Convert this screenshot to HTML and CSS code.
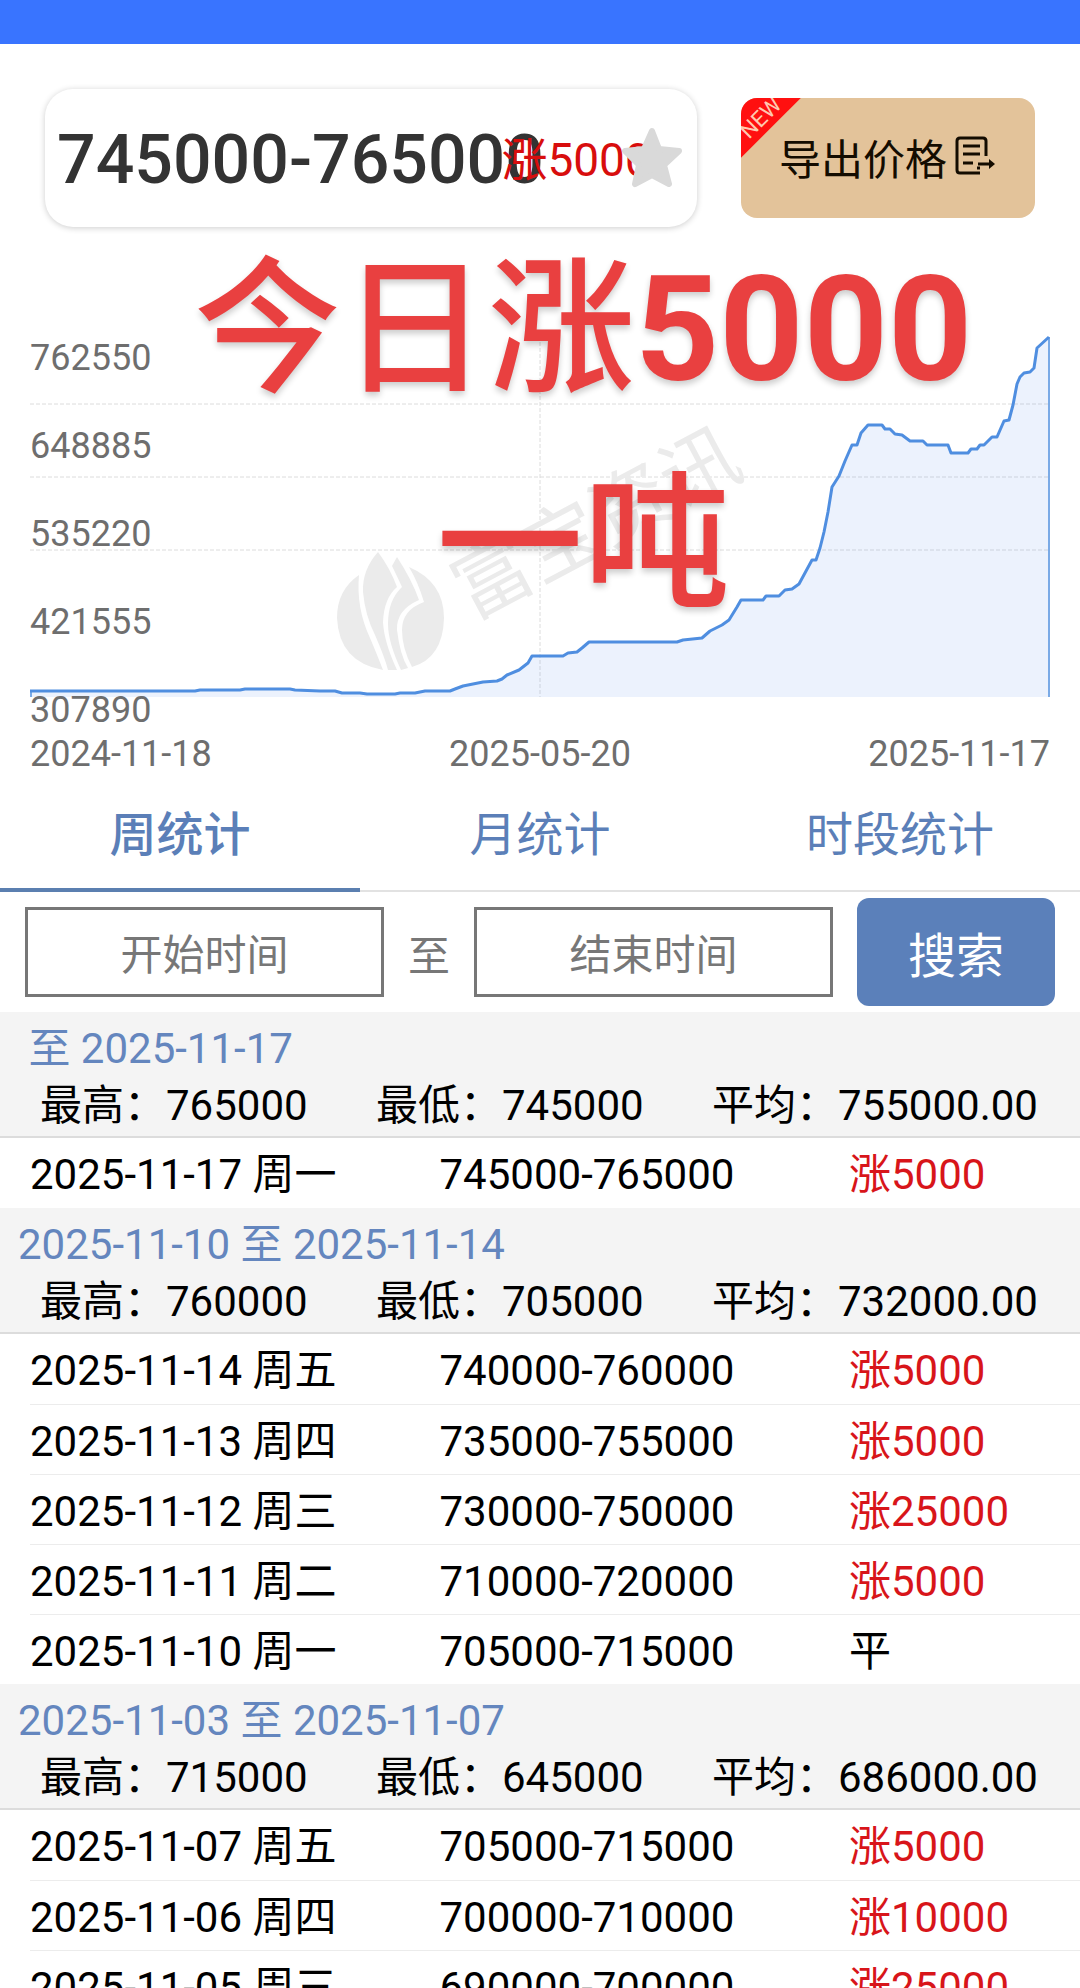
FILE: index.html
```html
<!DOCTYPE html>
<html lang="zh-CN">
  <head>
    <meta charset="UTF-8" />
    <meta name="viewport" content="width=device-width, initial-scale=1.0" />
    <title>价格走势</title>
    <link rel="stylesheet" href="styles.css">
  </head>
  <body>
    <header class="top-bar"></header>

    <section class="price-bar">
      <div class="price-card">
        <span class="price">745000-765000</span>
        <span class="price-change">涨5000</span>
        <button type="button" class="star-button" aria-label="收藏">
          <svg viewBox="0 0 62 62">
            <path d="M31 4 L38 22 L58 24 L43 38 L48 57 L31 48 L14 57 L18 38 L4 24 L23 22 Z" fill="#d9d9d9" stroke="#d9d9d9" stroke-width="6" stroke-linejoin="round" />
          </svg>
        </button>
      </div>
      <button type="button" class="export-button">
        <span class="ribbon">NEW</span>
        导出价格
        <svg class="export-icon" viewBox="0 0 42 40">
          <path d="M25 37 H5 Q2 37 2 34 V5 Q2 2 5 2 H28 Q31 2 31 5 V20" />
          <path d="M8 10 H25 M8 18 H25 M8 27 H18" />
          <path d="M23 28 H37 M22 32 H25" />
          <path d="M34 23 L40 28 L34 33 Z" class="arrow" />
        </svg>
      </button>
    </section>

    <section class="chart">
      <div class="plot">
        <svg class="plot-lines" viewBox="0 0 1020 368">
          <g class="grid">
            <path d="M0 74 H1019 M0 147 H1019 M0 220 H1019 M510 0 V367" />
          </g>
          <g class="watermark">
            <path d="M329 245 Q307 260 307 288 Q309 332 353 340 Q346 322 340 308 Q326 278 329 245 Z" />
            <path d="M348 222 Q332 240 333 262 Q335 285 345 305 Q355 328 358 340 L367 340 Q354 312 353 292 Q354 268 367 257 Q360 238 348 222 Z" />
            <path d="M367 227 Q382 250 389 270 Q366 280 367 300 Q370 325 378 338 L371 340 Q358 312 358 294 Q358 270 372 257 Q366 244 362 236 Z" />
            <path d="M379 237 Q414 252 414 288 Q413 328 382 337 Q372 318 372 300 Q372 280 394 272 Q388 252 379 237 Z" />
            <text transform="translate(461 247) rotate(-28)" x="-38" y="29">富宝资讯</text>
          </g>
          <path class="area" d="M0 361 L165 361 L170 360 L210 360 L215 359 L260 359 L265 360 L290 361 L305 361 L312 363 L330 363 L337 364 L365 364 L370 363 L385 363 L395 361 L420 361 L425 359 L433 356 L453 352 L467 351 L472 349 L477 345 L489 340 L498 333 L502 326 L533 326 L538 323 L547 322 L552 318 L559 312 L647 312 L653 310 L672 308 L680 301 L692 295 L699 290 L707 277 L711 270 L733 270 L736 266 L749 266 L755 260 L762 259 L769 254 L782 230 L786 230 L790 218 L794 202 L798 182 L802 157 L809 146 L815 131 L822 115 L827 115 L831 103 L838 95 L852 95 L855 99 L860 99 L865 104 L872 105 L880 111 L893 111 L897 115 L918 115 L921 123 L938 123 L941 119 L947 119 L950 115 L954 115 L962 107 L967 107 L974 91 L979 90 L983 75 L987 54 L990 47 L994 43 L1000 42 L1004 38 L1007 18 L1019 7 V367 H0 Z" />
          <path class="edge" d="M1019 7 V367 M1 361 V367" />
          <path class="line" d="M0 361 L165 361 L170 360 L210 360 L215 359 L260 359 L265 360 L290 361 L305 361 L312 363 L330 363 L337 364 L365 364 L370 363 L385 363 L395 361 L420 361 L425 359 L433 356 L453 352 L467 351 L472 349 L477 345 L489 340 L498 333 L502 326 L533 326 L538 323 L547 322 L552 318 L559 312 L647 312 L653 310 L672 308 L680 301 L692 295 L699 290 L707 277 L711 270 L733 270 L736 266 L749 266 L755 260 L762 259 L769 254 L782 230 L786 230 L790 218 L794 202 L798 182 L802 157 L809 146 L815 131 L822 115 L827 115 L831 103 L838 95 L852 95 L855 99 L860 99 L865 104 L872 105 L880 111 L893 111 L897 115 L918 115 L921 123 L938 123 L941 119 L947 119 L950 115 L954 115 L962 107 L967 107 L974 91 L979 90 L983 75 L987 54 L990 47 L994 43 L1000 42 L1004 38 L1007 18 L1019 7" />
        </svg>
        <div class="y-axis">
          <span>762550</span>
          <span>648885</span>
          <span>535220</span>
          <span>421555</span>
          <span>307890</span>
        </div>
      </div>
      <div class="x-axis">
        <span>2024-11-18</span>
        <span>2025-05-20</span>
        <span>2025-11-17</span>
      </div>
      <p class="headline">今日涨<b>5000</b><br>一吨</p>
    </section>

    <nav class="tabs">
      <button type="button" class="tab active">周统计</button>
      <button type="button" class="tab">月统计</button>
      <button type="button" class="tab">时段统计</button>
    </nav>

    <form class="search">
      <input type="text" id="startTime" placeholder="开始时间" aria-label="开始时间" />
      <label for="endTime">至</label>
      <input type="text" id="endTime" placeholder="结束时间" />
      <button type="button">搜索</button>
    </form>

    <section class="week">
      <div class="week-head">
        <h2>&nbsp;至 2025-11-17</h2>
        <div class="stats">
          <span>最高：765000</span>
          <span>最低：745000</span>
          <span>平均：755000.00</span>
        </div>
      </div>
      <table>
        <tr><td>2025-11-17 周一</td><td>745000-765000</td><td class="up">涨5000</td></tr>
      </table>
    </section>

    <section class="week">
      <div class="week-head">
        <h2>2025-11-10 至 2025-11-14</h2>
        <div class="stats">
          <span>最高：760000</span>
          <span>最低：705000</span>
          <span>平均：732000.00</span>
        </div>
      </div>
      <table>
        <tr><td>2025-11-14 周五</td><td>740000-760000</td><td class="up">涨5000</td></tr>
        <tr><td>2025-11-13 周四</td><td>735000-755000</td><td class="up">涨5000</td></tr>
        <tr><td>2025-11-12 周三</td><td>730000-750000</td><td class="up">涨25000</td></tr>
        <tr><td>2025-11-11 周二</td><td>710000-720000</td><td class="up">涨5000</td></tr>
        <tr><td>2025-11-10 周一</td><td>705000-715000</td><td>平</td></tr>
      </table>
    </section>

    <section class="week">
      <div class="week-head">
        <h2>2025-11-03 至 2025-11-07</h2>
        <div class="stats">
          <span>最高：715000</span>
          <span>最低：645000</span>
          <span>平均：686000.00</span>
        </div>
      </div>
      <table>
        <tr><td>2025-11-07 周五</td><td>705000-715000</td><td class="up">涨5000</td></tr>
        <tr><td>2025-11-06 周四</td><td>700000-710000</td><td class="up">涨10000</td></tr>
        <tr><td>2025-11-05 周三</td><td>690000-700000</td><td class="up">涨25000</td></tr>
      </table>
    </section>
  </body>
</html>
```
FILE: styles.css
```css
* {
  box-sizing: border-box;
}
body {
  margin: 0;
  background-color: #fff;
  color: #000;
  font-family: Roboto, "Noto Sans CJK SC", sans-serif;
  font-size: 42px;
}
button,
input {
  font-family: inherit;
}
button {
  padding: 0;
  border: none;
  background: none;
  cursor: pointer;
}
.top-bar {
  height: 44px;
  background-color: #3974ff;
}

/* current price */
.price-bar {
  display: flex;
  align-items: center;
  gap: 44px;
  padding: 45px 45px 0;
}
.price-card {
  position: relative;
  flex: 1;
  padding: 4px 12px 0;
  border-radius: 28px;
  line-height: 134px;
  box-shadow: 0 1px 6px rgba(0, 0, 0, 0.2);
}
.price {
  display: block;
  color: #333;
  font-size: 68px;
  font-weight: 500;
}
.price-change {
  position: absolute;
  top: 4px;
  left: 70%;
  color: #d80d0d;
  font-size: 46px;
}
.star-button {
  position: absolute;
  top: 38px;
  right: 14px;
  width: 62px;
  height: 62px;
}
.star-button svg {
  display: block;
}
.export-button {
  position: relative;
  display: flex;
  align-items: center;
  justify-content: center;
  gap: 8px;
  width: 294px;
  height: 120px;
  padding-bottom: 4px;
  overflow: hidden;
  border-radius: 16px;
  background-color: #e3c39a;
  color: #140c00;
  font-size: 42px;
}
.ribbon {
  position: absolute;
  top: 6px;
  left: -40px;
  width: 120px;
  height: 28px;
  background-color: #ff1010;
  box-shadow: 0 -20px 0 #ff1010;
  color: #ffc9b0;
  font-size: 22px;
  line-height: 28px;
  transform: rotate(-45deg);
}
.export-icon {
  width: 42px;
  height: 40px;
  fill: none;
  stroke: #140c00;
  stroke-width: 3;
}
.export-icon .arrow {
  fill: #140c00;
  stroke: none;
}

/* chart */
.chart {
  position: relative;
  padding: 103px 30px 0;
}
.plot {
  display: grid;
}
.plot-lines,
.y-axis {
  grid-area: 1 / 1;
}
.plot-lines {
  width: 100%;
}
.y-axis {
  display: flex;
  flex-direction: column;
  padding-top: 6px;
  gap: 44px;
}
.y-axis,
.x-axis {
  color: #6e6e6e;
  font-size: 36px;
  line-height: 44px;
}
.x-axis {
  display: flex;
  justify-content: space-between;
}
.grid {
  fill: none;
  stroke: #dcdcdc;
  stroke-width: 1;
  stroke-dasharray: 4 2;
}
.watermark {
  fill: #ebebeb;
}
.watermark text {
  font-size: 78px;
}
.area {
  fill: rgba(80, 140, 240, 0.11);
}
.line {
  fill: none;
  stroke: #4f8ee0;
  stroke-width: 3;
  stroke-linejoin: round;
}
.edge {
  stroke: #7aaae6;
  stroke-width: 2;
}
.headline {
  position: absolute;
  top: -4px;
  left: 8%;
  right: 0;
  margin: 0;
  color: #e94040;
  font-size: 147px;
  font-weight: 500;
  line-height: 215px;
  text-align: center;
  text-shadow: 0 4px 6px rgba(0, 0, 0, 0.2);
}

/* tabs */
.tabs {
  display: flex;
  border-bottom: 2px solid #e2e2e2;
}
.tab {
  flex: 1;
  height: 116px;
  margin-bottom: -2px;
  padding-bottom: 4px;
  border-bottom: 4px solid transparent;
  color: #5b7fb8;
  font-size: 47px;
}
.tab.active {
  border-color: #5b7fb0;
  font-weight: 500;
}

/* date search */
.search {
  display: flex;
  align-items: center;
  gap: 24px;
  padding: 6px 25px;
  color: #777;
}
.search label {
  width: 42px;
  text-align: center;
}
.search input {
  flex: 1;
  min-width: 0;
  height: 90px;
  padding: 6px 0 0;
  border: 3px solid #777;
  font-size: 42px;
  text-align: center;
}
.search input::placeholder {
  color: #777;
}
.search button {
  width: 198px;
  height: 108px;
  border-radius: 12px;
  background-color: #5b80ba;
  color: #fff;
  font-size: 48px;
}

/* weekly tables */
.week-head {
  padding: 8px 0 2px;
  border-bottom: 2px solid #dcdcdc;
  background-color: #f4f4f4;
  line-height: 57px;
}
.week-head h2 {
  margin: 0;
  padding-left: 18px;
  color: #6486be;
  font-size: 42px;
  font-weight: 400;
}
.stats {
  display: grid;
  grid-template-columns: repeat(3, 1fr);
  padding-left: 40px;
  padding-right: 32px;
}
.stats span {
  white-space: nowrap;
}
table {
  width: calc(100% - 30px);
  margin-left: 30px;
  border-spacing: 0;
  table-layout: fixed;
}
td {
  width: 39%;
  height: 70px;
  padding: 4px 0 0;
  line-height: 56px;
}
td:last-child {
  width: 22%;
}
tr + tr td {
  border-top: 1px solid #ececec;
}
.up {
  color: #d8151a;
}
```
